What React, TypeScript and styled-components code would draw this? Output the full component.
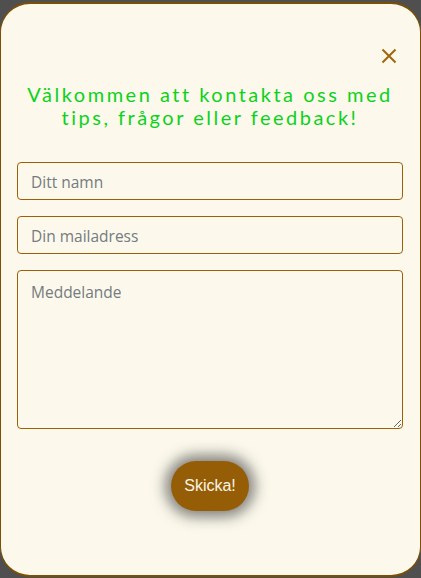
import React from "react";
import styled, { createGlobalStyle } from "styled-components";

const Global = createGlobalStyle`
  html, body { margin: 0; padding: 0; background: #4f4f4f; }
  * { box-sizing: border-box; }
`;

const Modal = styled.div`
  margin-top: 2px;
  width: 421px;
  height: 575px;
  background: #fcf9ec;
  border: 2px solid #7b4f05;
  border-left-width: 1px;
  border-right-width: 1px;
  border-radius: 30px;
  display: flex;
  flex-direction: column;
  padding: 40px 17px 0 16px;
`;

const TopBar = styled.div`
  display: flex;
  justify-content: flex-end;
  height: 24px;
  padding-right: 2px;
`;

const Close = styled.button`
  width: 24px;
  height: 24px;
  border: none;
  background: none;
  padding: 0;
  display: flex;
  align-items: center;
  justify-content: center;
  cursor: pointer;
`;

const Heading = styled.h2`
  margin: 15px 0 0 0;
  font-family: "Lato", "Open Sans", sans-serif;
  font-weight: 400;
  font-size: 20px;
  line-height: 23px;
  letter-spacing: 2.5px;
  color: #0cd21c;
  text-align: center;
`;

const Form = styled.form`
  margin-top: 33px;
  display: flex;
  flex-direction: column;
  gap: 16px;
`;

const Field = styled.input`
  width: 100%;
  height: 38px;
  border: 1px solid #9a6206;
  border-radius: 4px;
  background: #fcf9ec;
  padding: 2px 13px 0 13px;
  font-family: "Open Sans", "Noto Sans", sans-serif;
  font-size: 15.5px;
  color: #333;
  outline: none;
  &::placeholder { color: #757b80; }
`;

const Area = styled.textarea`
  width: 100%;
  height: 159px;
  border: 1px solid #9a6206;
  border-radius: 4px;
  background: #fcf9ec;
  padding: 10px 13px;
  font-family: "Open Sans", "Noto Sans", sans-serif;
  font-size: 15.5px;
  color: #333;
  outline: none;
  resize: vertical;
  &::placeholder { color: #757b80; }
`;

const ButtonRow = styled.div`
  display: flex;
  justify-content: center;
  margin-top: 16px;
`;

const Send = styled.button`
  width: 78px;
  height: 50px;
  border: none;
  border-radius: 25px;
  background: #955e06;
  color: #fbf4e4;
  font-family: "Liberation Sans", Arial, sans-serif;
  font-size: 16px;
  box-shadow: 0 0 14px 6px rgba(30, 30, 30, 0.55);
  cursor: pointer;
`;

export default function App() {
  return (
    <>
      <Global />
      <Modal>
        <TopBar>
          <Close aria-label="Stäng">
            <svg width="16" height="16" viewBox="0 0 16 16">
              <path d="M1.5 1.5 L14.5 14.5 M14.5 1.5 L1.5 14.5" stroke="#a0660a" strokeWidth="2" fill="none" />
            </svg>
          </Close>
        </TopBar>
        <Heading>
          Välkommen att kontakta oss med
          <br />
          tips, frågor eller feedback!
        </Heading>
        <Form onSubmit={(e) => e.preventDefault()}>
          <Field placeholder="Ditt namn" />
          <Field placeholder="Din mailadress" />
          <Area placeholder="Meddelande" />
          <ButtonRow>
            <Send type="submit">Skicka!</Send>
          </ButtonRow>
        </Form>
      </Modal>
    </>
  );
}
